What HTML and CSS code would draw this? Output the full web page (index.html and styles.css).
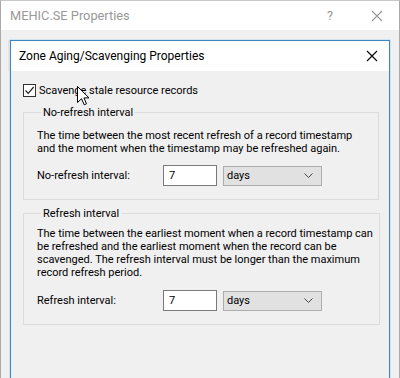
FILE: index.html
```html
<!DOCTYPE html>
<html lang="en">
<head>
  <meta charset="UTF-8">
  <title>MEHIC.SE Properties</title>
  <link rel="stylesheet" href="styles.css">
</head>
<body>
  <div class="window">
    <div class="titlebar">
      <span class="title">MEHIC.SE Properties</span>
      <span class="help">?</span>
      <svg class="close-outer" width="12" height="12" viewBox="0 0 12 12"><path d="M1 1L11 11M11 1L1 11" stroke="#999" stroke-width="1.1"/></svg>
    </div>
    <div class="window-body">
      <!-- tabs of the parent sheet, behind the dialog -->
      <div class="tabstrip">
        <span class="tab t1"></span><span class="tab t2"></span><span class="tab t3"></span>
      </div>

      <div class="dialog">
        <div class="dialog-title">
          <span>Zone Aging/Scavenging Properties</span>
          <svg width="12" height="12" viewBox="0 0 12 12"><path d="M1 1L11 11M11 1L1 11" stroke="#000" stroke-width="1.1"/></svg>
        </div>
        <div class="dialog-body">
          <label class="check-row">
            <span class="checkbox">
              <svg width="11" height="11" viewBox="0 0 11 11"><path d="M1.5 5.5L4.2 8.3L9.7 2" fill="none" stroke="#222" stroke-width="1.2"/></svg>
            </span>
            <span>Scavenge stale resource records</span>
            <svg class="cursor" width="13" height="20" viewBox="0 0 13 20"><path d="M0.5 0.5V16.5L4.5 12.7L7.2 18.8L9.5 17.8L6.9 11.9H12Z" fill="#fff" stroke="#000" stroke-width="1" stroke-linejoin="round"/></svg>
          </label>

          <fieldset class="group g1">
            <legend>No-refresh interval</legend>
            <p>The time between the most recent refresh of a record timestamp<br>and the moment when the timestamp may be refreshed again.</p>
            <div class="field-row">
              <span class="field-label">No-refresh interval:</span>
              <span class="num-input">7</span>
              <span class="select">days
                <svg width="9" height="5" viewBox="0 0 9 5"><path d="M0.5 0.5L4.5 4.5L8.5 0.5" fill="none" stroke="#444" stroke-width="1"/></svg>
              </span>
            </div>
          </fieldset>

          <fieldset class="group g2">
            <legend>Refresh interval</legend>
            <p>The time between the earliest moment when a record timestamp can<br>be refreshed and the earliest moment when the record can be<br>scavenged. The refresh interval must be longer than the maximum<br>record refresh period.</p>
            <div class="field-row">
              <span class="field-label">Refresh interval:</span>
              <span class="num-input">7</span>
              <span class="select">days
                <svg width="9" height="5" viewBox="0 0 9 5"><path d="M0.5 0.5L4.5 4.5L8.5 0.5" fill="none" stroke="#444" stroke-width="1"/></svg>
              </span>
            </div>
          </fieldset>
        </div>
      </div>
    </div>
  </div>
</body>
</html>
```

FILE: styles.css
```css
body {
  margin: 0;
  width: 400px;
  height: 378px;
  overflow: hidden;
  background: #fff;
  font-family: Roboto, 'Noto Sans', sans-serif;
  font-size: 11px;
  color: #000;
}
.window {
  height: 378px;
  width: 400px;
  box-sizing: border-box;
  border-top: 1px solid #c8c8c8;
  border-left: 1px solid #aaa;
  border-right: 1px solid #aaa;
  display: flex;
  flex-direction: column;
}
.titlebar {
  height: 29px;
  background: #fff;
  display: flex;
  align-items: center;
  padding-left: 9px;
  flex-shrink: 0;
}
.title {
  color: #999;
  font-size: 12.8px;
  flex: 1;
}
.help {
  color: #999;
  font-size: 12.5px;
  margin-right: 38px;
}
.close-outer { margin-right: 16px; }
.window-body {
  flex: 1;
  background: #f0f0f0;
  padding: 10px 0 0 9px;
  position: relative;
}
.tabstrip {
  position: absolute;
  left: 7px;
  top: 10px;
  right: 6px;
  height: 30px;
  display: flex;
}
.tab {
  border-top: 1px solid #e2e2e2;
  border-right: 1px solid #e2e2e2;
  height: 30px;
}
.t1 { width: 112px; border-left: 1px solid #e2e2e2; }
.t2 { width: 152px; }
.t3 { width: 110px; }
.dialog {
  position: relative;
  width: 380px;
  height: 340px;
  box-sizing: border-box;
  border: 1px solid #3a87c6;
  background: #f0f0f0;
  box-shadow: 0 0 0 1px rgba(160, 200, 230, 0.35);
}
.dialog-title {
  height: 30px;
  background: #fff;
  display: flex;
  align-items: center;
  justify-content: space-between;
  padding: 0 11px 0 8px;
  font-size: 12px;
}
.dialog-body {
  padding: 13px 10px 0 12px;
}
.check-row {
  display: flex;
  align-items: center;
  gap: 3px;
  height: 13px;
  position: relative;
}
.checkbox {
  width: 11px;
  height: 11px;
  border: 1px solid #333;
  background: #fff;
  display: flex;
}
.cursor {
  position: absolute;
  left: 54px;
  top: 2px;
}
.group {
  margin: 9px 0 0 0;
  border: 1px solid #dcdcdc;
  padding: 0 6px 13px 13px;
}
.group legend {
  padding: 0 2px;
  margin-left: 4px;
}
.group p {
  margin: 10px 0 10px 0;
  line-height: 13px;
  white-space: nowrap;
}
.g2 { margin-top: 7px; }
.g2 p { margin: 7px 0 11px 0; }
.field-row {
  display: flex;
  align-items: center;
}
.field-label { width: 126px; }
.num-input {
  width: 47px;
  height: 19px;
  border: 1px solid #7a7a7a;
  background: #fff;
  padding-left: 5px;
  line-height: 19px;
  margin-right: 6px;
}
.select {
  width: 86px;
  height: 18px;
  border: 1px solid #adadad;
  background: #e1e1e1;
  padding: 0 8px 0 3px;
  display: flex;
  align-items: center;
  justify-content: space-between;
}
```
